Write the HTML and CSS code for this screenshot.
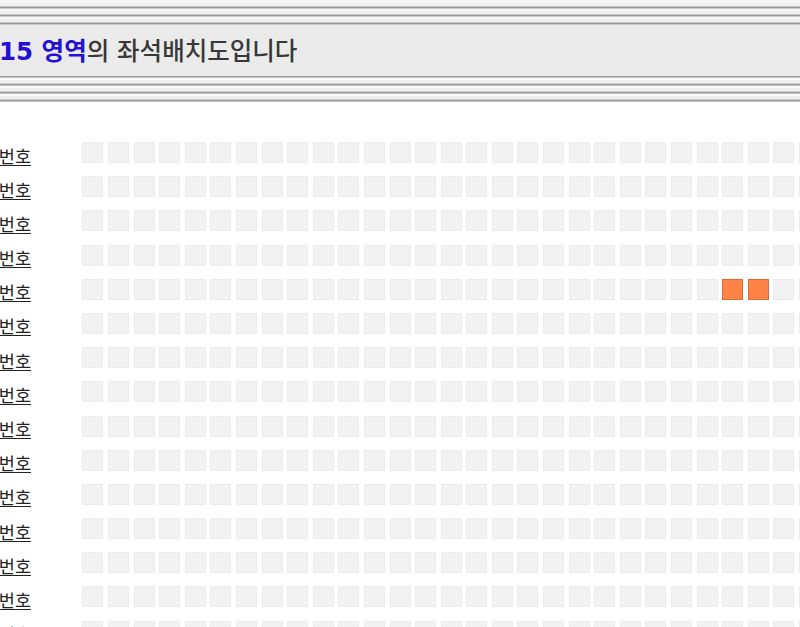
FILE: index.html
```html
<!DOCTYPE html>
<html lang="ko">
<head>
<meta charset="utf-8">
<title>좌석배치도</title>
<link rel="stylesheet" href="styles.css">
</head>
<body>
<div class="page">
  <header class="banner">
    <div class="stripes"></div>
    <div class="title-bar">
      <h1 class="title"><span class="zone">15 영역</span>의 좌석배치도입니다</h1>
    </div>
    <div class="stripes stripes-bottom"></div>
  </header>

  <main class="seat-map" id="seatMap"></main>
</div>
<script src="app.js"></script>
</body>
</html>
```

FILE: styles.css
```css
html, body {
  margin: 0;
  padding: 0;
  background: #ffffff;
}

body {
  overflow: hidden;
  font-family: "DejaVu Sans", "Noto Sans CJK KR", sans-serif;
}

.page {
  width: 800px;
  overflow: hidden;
}

/* embossed line bands above and below the title */
.stripes {
  height: 25px;
  background: repeating-linear-gradient(
    to bottom,
    #f6f6f6 0 2px,
    #eeeeee 2px 5px,
    #c6c6c6 5px 6px,
    #979797 6px 7px,
    #c9c9c9 7px 8px
  );
  background-position: 0 1px;
}

.stripes-bottom {
  height: 26px;
  background: repeating-linear-gradient(
    to bottom,
    #9a9a9a 0 1px,
    #c3c3c3 1px 2px,
    #fafafa 2px 4px,
    #eeeeee 4px 7px,
    #cfcfcf 7px 8px
  );
  background-position: 0 0;
}

.title-bar {
  height: 51px;
  background: #ebebeb;
  display: flex;
  align-items: center;
}

.title {
  margin: 0 0 2px -1px;
  font-size: 24.5px;
  font-weight: 500;
  color: #383838;
  white-space: nowrap;
}

.zone {
  color: #2410d4;
  font-weight: bold;
}

/* seat grid */
.seat-map {
  padding-top: 40px;
  display: flex;
  flex-direction: column;
  gap: 13.2px;
}

.seat-row {
  display: flex;
  align-items: center;
  height: 21px;
}

.row-label {
  width: 52px;
  margin-left: -21px;
  margin-right: 51.4px;
  padding-top: 5px;
  flex: none;
  text-align: right;
  font-family: "Noto Sans CJK KR", sans-serif;
  font-size: 17.5px;
  line-height: 21px;
  color: #222222;
  text-decoration: underline;
  text-underline-offset: 2px;
  white-space: nowrap;
}

.seats {
  display: flex;
  gap: 4.6px;
  flex: none;
}

.seat {
  width: 21px;
  height: 21px;
  box-sizing: border-box;
  background: #f2f2f2;
  border: 1px solid #ececec;
  flex: none;
}

.seat.sold {
  background: #ff8347;
  border-color: #dd6a34;
}
```

FILE: app.js
```js
// Builds the rows of seats for the zone map.
(function () {
  var map = document.getElementById('seatMap');
  var rows = 15;
  var cols = 30;
  var available = { '4-25': true, '4-26': true };

  for (var r = 0; r < rows; r++) {
    var row = document.createElement('div');
    row.className = 'seat-row';

    var label = document.createElement('span');
    label.className = 'row-label';
    label.textContent = '번호';
    row.appendChild(label);

    var seats = document.createElement('div');
    seats.className = 'seats';
    for (var c = 0; c < cols; c++) {
      var seat = document.createElement('span');
      seat.className = 'seat' + (available[r + '-' + c] ? ' sold' : '');
      seats.appendChild(seat);
    }
    row.appendChild(seats);
    map.appendChild(row);
  }
})();
```
